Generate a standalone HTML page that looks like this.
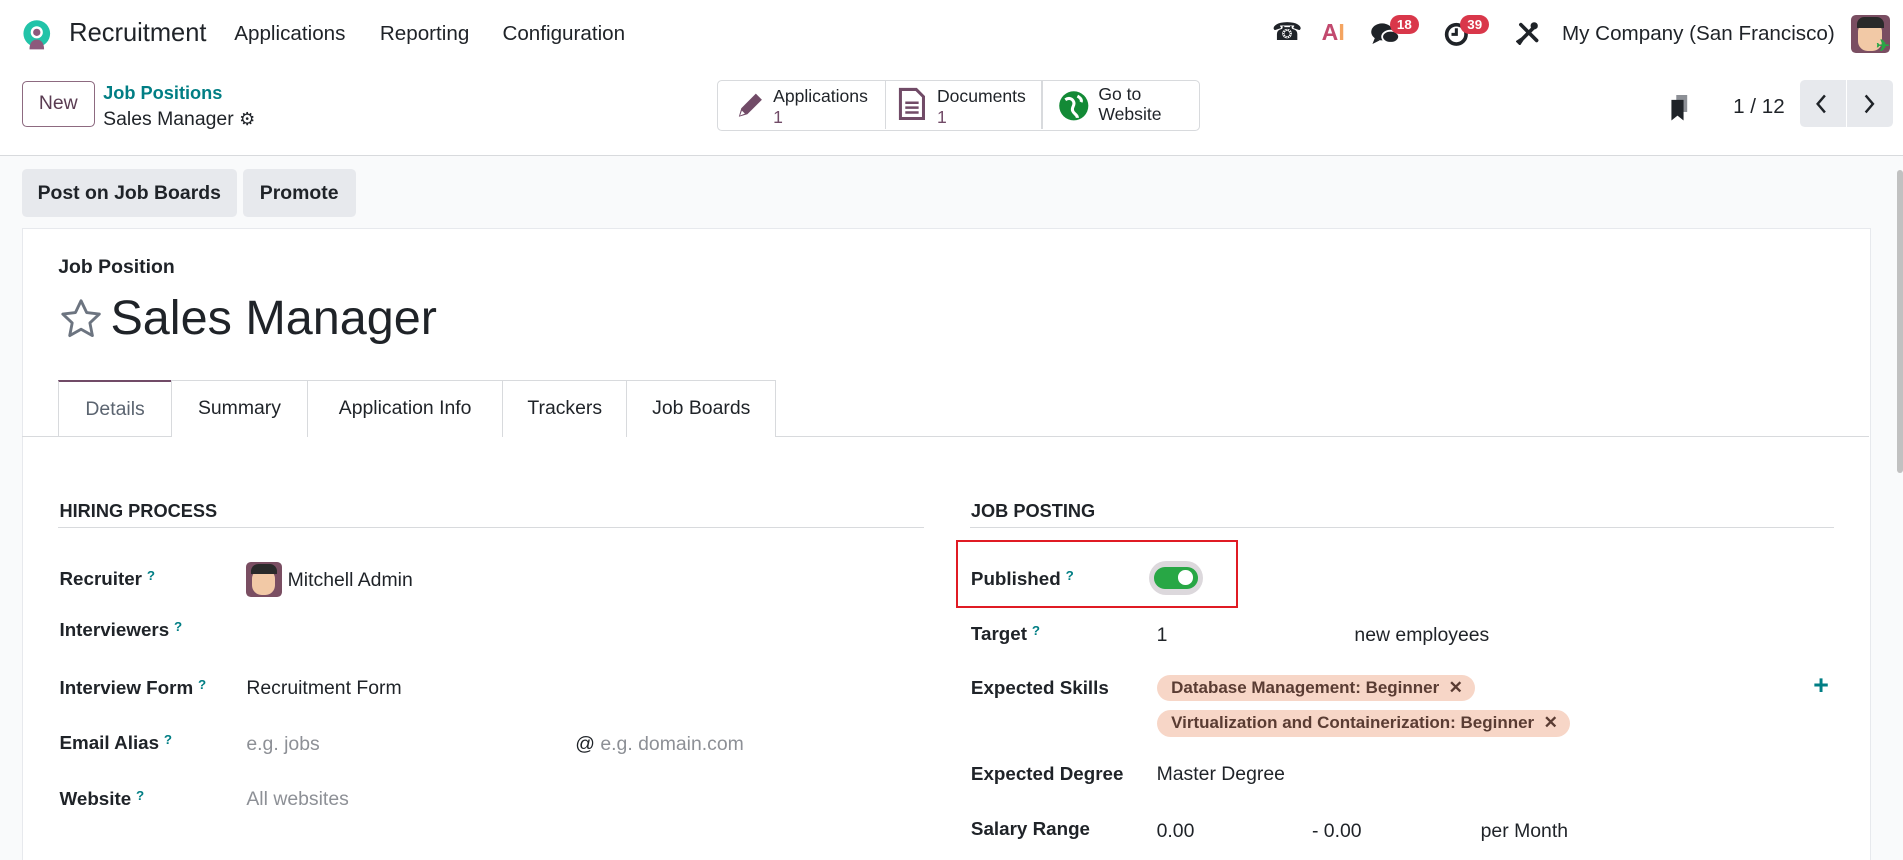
<!DOCTYPE html>
<html><head><meta charset="utf-8">
<style>
html,body{margin:0;padding:0;}
html{overflow:hidden;height:860px;}
body{width:1568px;height:709px;zoom:1.21365;overflow:hidden;background:#f9fafb;font-family:"Liberation Sans",sans-serif;color:#1f2328;position:relative;}
.a{position:absolute;white-space:nowrap;}
.top{position:absolute;left:0;top:0;width:1568px;height:128px;background:#fff;border-bottom:1px solid #d8dadd;}
.lbl{font-weight:bold;font-size:15.5px;color:#1f2328;}
.q{color:#017e84;font-size:11px;font-weight:bold;vertical-align:top;margin-left:4px;}
.val{font-size:16px;color:#1f2328;}
.ph{font-size:16px;color:#8d9096;}
.badge{position:absolute;background:#d9374a;color:#fff;font-size:11px;font-weight:bold;border-radius:10px;padding:2px 6px;}
.tab{position:absolute;top:313px;height:46px;border:1px solid #d8dadd;border-bottom:none;background:#fff;font-size:16px;line-height:46px;text-align:center;color:#1f2328;}
.tag{position:absolute;background:#f7d6c7;color:#5a3c33;font-size:14px;border-radius:12px;height:22px;line-height:22px;padding:0 10px 0 12px;font-weight:bold;}
</style></head><body>
<div class="top"></div>
<svg class="a" style="left:17px;top:16px" width="26" height="26" viewBox="0 0 26 26"><circle cx="13" cy="12" r="11" fill="#22c3a8"/><circle cx="13" cy="11" r="5" fill="#fff"/><path d="M7 25c0-6 3-8 6-8s6 2 6 8z" fill="#8d5a7c"/><circle cx="13" cy="11" r="3" fill="#8d5a7c"/></svg>
<div class="a" style="left:57px;top:16px;font-size:21px;">Recruitment</div>
<div class="a" style="left:193px;top:18px;font-size:17px;">Applications</div>
<div class="a" style="left:313px;top:18px;font-size:17px;">Reporting</div>
<div class="a" style="left:414px;top:18px;font-size:17px;">Configuration</div>
<div class="a" style="left:1048px;top:14px;font-size:20px;">☎</div>
<div class="a" style="left:1089px;top:16px;font-size:19px;font-weight:bold;color:#c2496e;">A<span style="color:#f4a460">I</span></div>
<svg class="a" style="left:1129px;top:17px" width="26" height="22" viewBox="0 0 26 22"><ellipse cx="10" cy="9" rx="9" ry="7" fill="#1f2328"/><path d="M4 14l-2 5 6-3z" fill="#1f2328"/><ellipse cx="17" cy="13" rx="7" ry="5" fill="#1f2328" stroke="#fff" stroke-width="1.5"/></svg>
<div class="badge" style="left:1145px;top:12px;">18</div>
<svg class="a" style="left:1189px;top:17px" width="22" height="22" viewBox="0 0 22 22"><circle cx="11" cy="11" r="8" fill="none" stroke="#1f2328" stroke-width="3"/><path d="M11 6v5h-4" stroke="#1f2328" stroke-width="2.5" fill="none"/></svg>
<div class="badge" style="left:1203px;top:12px;">39</div>
<svg class="a" style="left:1249px;top:17px" width="20" height="20" viewBox="0 0 20 20"><path d="M3 17L15 5M5 15l-2 3-1-1 3-2" stroke="#1f2328" stroke-width="3" stroke-linecap="round"/><path d="M4 3l13 13" stroke="#1f2328" stroke-width="3" stroke-linecap="round"/><circle cx="15" cy="4" r="3" fill="#1f2328"/></svg>
<div class="a" style="left:1287px;top:18px;font-size:17px;">My Company (San Francisco)</div>
<div class="a" style="left:1525px;top:12px;width:32px;height:32px;border-radius:4px;background:#7a4e62;overflow:hidden;"><div style="position:absolute;left:6px;top:6px;width:20px;height:24px;background:#f2c9a6;border-radius:8px;"></div><div style="position:absolute;left:5px;top:2px;width:22px;height:9px;background:#2a2a2a;border-radius:6px 6px 0 0;"></div></div>
<div class="a" style="left:1546px;top:30px;color:#28a745;font-size:13px;font-weight:bold;">✈</div>
<div class="a" style="left:18px;top:67px;width:60px;height:38px;border:1px solid #8d6a80;border-radius:4px;box-sizing:border-box;text-align:center;line-height:36px;font-size:16px;color:#5a3c52;">New</div>
<div class="a" style="left:85px;top:68px;font-size:15px;color:#017e84;font-weight:bold;">Job Positions</div>
<div class="a" style="left:85px;top:89px;font-size:16px;">Sales Manager <span style="font-size:15px">⚙</span></div>
<div class="a" style="left:591px;top:66px;width:396px;height:40px;border:1px solid #d8dadd;border-radius:4px;background:#fff;"></div>
<div class="a" style="left:729px;top:67px;width:1px;height:39px;background:#d8dadd;"></div>
<div class="a" style="left:858px;top:67px;width:1px;height:39px;background:#d8dadd;"></div>
<svg class="a" style="left:605px;top:74px" width="26" height="26" viewBox="0 0 26 26"><path d="M4 22l2-7L18 3l5 5L11 20z" fill="#714b67"/><path d="M5 21l1.5-4 2.5 2.5z" fill="#fff"/></svg>
<div class="a" style="left:637px;top:71px;font-size:14.5px;line-height:17px;">Applications<br><span style="color:#714b67">1</span></div>
<svg class="a" style="left:740px;top:72px" width="24" height="28" viewBox="0 0 24 28"><path d="M2 2h13l6 6v18H2z" fill="none" stroke="#714b67" stroke-width="2.5"/><path d="M6 13h11M6 17h11M6 21h11" stroke="#714b67" stroke-width="2"/></svg>
<div class="a" style="left:772px;top:71px;font-size:14.5px;line-height:17px;">Documents<br><span style="color:#714b67">1</span></div>
<svg class="a" style="left:872px;top:74px" width="26" height="26" viewBox="0 0 26 26"><circle cx="13" cy="13" r="12" fill="#138a36"/><path d="M6 8c3-2 6-1 7 2s-2 4-1 7 4 3 4 6M16 5c2 1 4 3 3 5" stroke="#fff" stroke-width="2.5" fill="none"/></svg>
<div class="a" style="left:905px;top:69px;font-size:14.5px;line-height:17px;">Go to<br>Website</div>
<svg class="a" style="left:1375px;top:78px" width="20" height="22" viewBox="0 0 20 22"><rect x="6" y="0" width="9" height="14" fill="#8d9096"/><path d="M2 4h10v17l-5-4-5 4z" fill="#1f2328"/></svg>
<div class="a" style="left:1428px;top:78px;font-size:17px;">1 / 12</div>
<div class="a" style="left:1483px;top:66px;width:77px;height:39px;background:#e7e9ed;border-radius:4px;"></div>
<div class="a" style="left:1521px;top:66px;width:1px;height:39px;background:#fff;"></div>
<svg class="a" style="left:1495px;top:77px" width="12" height="18" viewBox="0 0 12 18"><path d="M9 2L3 9l6 7" stroke="#1f2328" stroke-width="2" fill="none"/></svg>
<svg class="a" style="left:1534px;top:77px" width="12" height="18" viewBox="0 0 12 18"><path d="M3 2l6 7-6 7" stroke="#1f2328" stroke-width="2" fill="none"/></svg>
<div class="a" style="left:18px;top:139px;width:177px;height:40px;background:#e7e9ed;border-radius:4px;text-align:center;line-height:40px;font-size:16px;font-weight:bold;color:#1f2328;">Post on Job Boards</div>
<div class="a" style="left:200px;top:139px;width:93px;height:40px;background:#e7e9ed;border-radius:4px;text-align:center;line-height:40px;font-size:16px;font-weight:bold;color:#1f2328;">Promote</div>
<div class="a" style="left:1563px;top:140px;width:5px;height:250px;background:#c1c1c1;border-radius:3px;"></div>
<div class="a" style="left:18px;top:188px;width:1522px;height:530px;background:#fff;border:1px solid #e7e9ed;border-bottom:none;"></div>
<div class="a" style="left:48px;top:211px;font-size:16px;font-weight:bold;">Job Position</div>
<svg class="a" style="left:48px;top:244px" width="38" height="38" viewBox="0 0 24 24"><path d="M12 2.5l2.9 6.1 6.6.8-4.9 4.6 1.3 6.6L12 17.3l-5.9 3.3 1.3-6.6-4.9-4.6 6.6-.8z" fill="none" stroke="#6c7480" stroke-width="1.5" stroke-linejoin="round"/></svg>
<div class="a" style="left:91px;top:239px;font-size:40px;">Sales Manager</div>
<div class="a" style="left:18px;top:359px;width:1522px;height:1px;background:#d8dadd;"></div>
<div class="tab" style="left:48px;width:92px;color:#5b6470;border-top:2px solid #714b67;height:45px;">Details</div>
<div class="tab" style="left:141px;width:111px;">Summary</div>
<div class="tab" style="left:253px;width:160px;">Application Info</div>
<div class="tab" style="left:414px;width:101px;">Trackers</div>
<div class="tab" style="left:516px;width:122px;">Job Boards</div>
<div class="a" style="left:49px;top:413px;font-size:15px;font-weight:bold;">HIRING PROCESS</div>
<div class="a" style="left:48px;top:434px;width:713px;height:1px;background:#d8dadd;"></div>
<div class="a lbl" style="left:49px;top:468px;">Recruiter<span class="q">?</span></div>
<div class="a" style="left:203px;top:463px;width:29px;height:29px;border-radius:4px;background:#7a4e62;overflow:hidden;"><div style="position:absolute;left:5px;top:6px;width:19px;height:21px;background:#f2c9a6;border-radius:8px;"></div><div style="position:absolute;left:4px;top:2px;width:21px;height:8px;background:#2a2a2a;border-radius:6px 6px 0 0;"></div></div>
<div class="a val" style="left:237px;top:469px;">Mitchell Admin</div>
<div class="a lbl" style="left:49px;top:510px;">Interviewers<span class="q">?</span></div>
<div class="a lbl" style="left:49px;top:558px;">Interview Form<span class="q">?</span></div>
<div class="a val" style="left:203px;top:558px;">Recruitment Form</div>
<div class="a lbl" style="left:49px;top:603px;">Email Alias<span class="q">?</span></div>
<div class="a ph" style="left:203px;top:604px;">e.g. jobs</div>
<div class="a ph" style="left:474px;top:604px;"><span style="color:#1f2328">@</span> e.g. domain.com</div>
<div class="a lbl" style="left:49px;top:649px;">Website<span class="q">?</span></div>
<div class="a ph" style="left:203px;top:649px;">All websites</div>
<div class="a" style="left:800px;top:413px;font-size:15px;font-weight:bold;">JOB POSTING</div>
<div class="a" style="left:799px;top:434px;width:712px;height:1px;background:#d8dadd;"></div>
<div class="a" style="left:788px;top:445px;width:229px;height:53px;border:2px solid #e01b24;"></div>
<div class="a lbl" style="left:800px;top:468px;">Published<span class="q">?</span></div>
<div class="a" style="left:947px;top:462px;width:44px;height:28px;border-radius:14px;background:#dcd8dc;"></div>
<div class="a" style="left:951px;top:467px;width:36px;height:18px;border-radius:9px;background:#28a745;"></div>
<div class="a" style="left:971px;top:470px;width:12px;height:12px;border-radius:6px;background:#fff;"></div>
<div class="a lbl" style="left:800px;top:513px;">Target<span class="q">?</span></div>
<div class="a val" style="left:953px;top:514px;">1</div>
<div class="a val" style="left:1116px;top:514px;">new employees</div>
<div class="a lbl" style="left:800px;top:558px;">Expected Skills</div>
<div class="tag" style="left:953px;top:556px;">Database Management: Beginner &nbsp;✕</div>
<div class="tag" style="left:953px;top:585px;">Virtualization and Containerization: Beginner &nbsp;✕</div>
<div class="a" style="left:1494px;top:552px;font-size:22px;font-weight:bold;color:#017e84;">+</div>
<div class="a lbl" style="left:800px;top:629px;">Expected Degree</div>
<div class="a val" style="left:953px;top:629px;">Master Degree</div>
<div class="a lbl" style="left:800px;top:674px;">Salary Range</div>
<div class="a val" style="left:953px;top:676px;">0.00</div>
<div class="a val" style="left:1081px;top:676px;">- 0.00</div>
<div class="a val" style="left:1220px;top:676px;">per Month</div>
</body></html>
